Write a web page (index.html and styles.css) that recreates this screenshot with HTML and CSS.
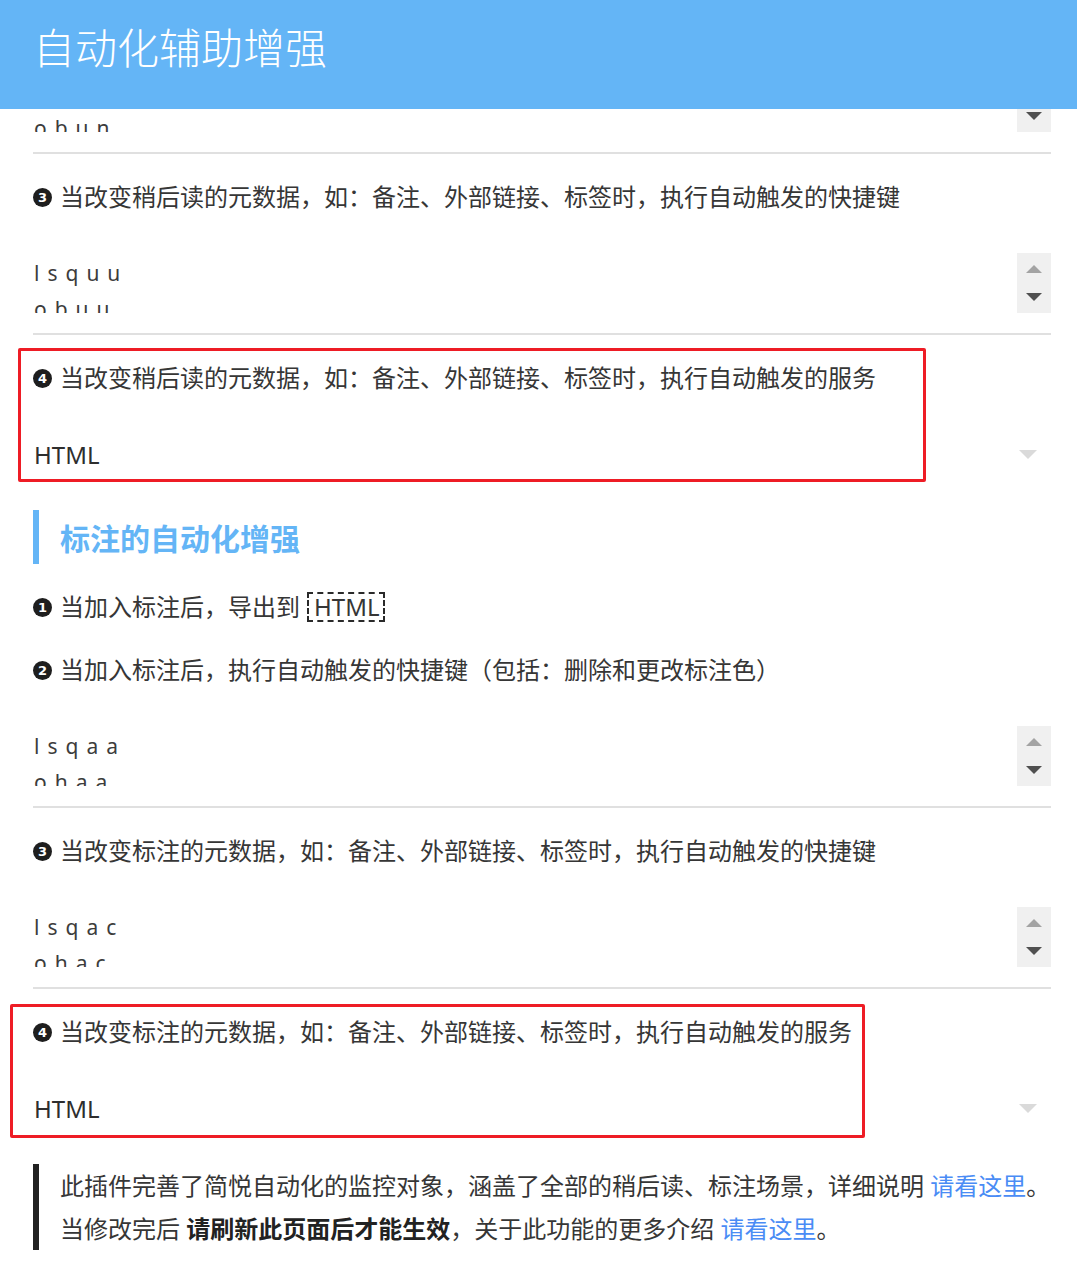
FILE: index.html
```html
<!DOCTYPE html>
<html lang="zh-CN">
<head>
<meta charset="utf-8">
<title>自动化辅助增强</title>
<link rel="stylesheet" href="styles.css">
</head>
<body>
<header class="topbar">
  <h1 class="topbar-title">自动化辅助增强</h1>
</header>

<main class="page">
  <div class="field field--partial">
    <div class="field-text">
      <div class="field-line">lsqun</div>
      <div class="field-line">obun</div>
    </div>
    <div class="scroll">
      <span class="arrow arrow-up arrow-muted"></span>
      <span class="arrow arrow-down"></span>
    </div>
  </div>

  <div class="item">
    <p class="label"><span class="num">3</span>当改变稍后读的元数据，如：备注、外部链接、标签时，执行自动触发的快捷键</p>
    <div class="field">
      <div class="field-text">
        <div class="field-line">lsquu</div>
        <div class="field-line">obuu</div>
      </div>
      <div class="scroll">
        <span class="arrow arrow-up arrow-muted"></span>
        <span class="arrow arrow-down"></span>
      </div>
    </div>
  </div>

  <div class="item item--flagged">
    <div class="flag flag-a"></div>
    <p class="label"><span class="num">4</span>当改变稍后读的元数据，如：备注、外部链接、标签时，执行自动触发的服务</p>
    <div class="select">
      <span class="select-value">HTML</span>
      <span class="select-caret"></span>
    </div>
  </div>

  <h2 class="section-title">标注的自动化增强</h2>

  <div class="item">
    <p class="label"><span class="num">1</span>当加入标注后，导出到 <span class="dashed">HTML</span></p>
  </div>

  <div class="item">
    <p class="label"><span class="num">2</span>当加入标注后，执行自动触发的快捷键（包括：删除和更改标注色）</p>
    <div class="field">
      <div class="field-text">
        <div class="field-line">lsqaa</div>
        <div class="field-line">ohaa</div>
      </div>
      <div class="scroll">
        <span class="arrow arrow-up arrow-muted"></span>
        <span class="arrow arrow-down"></span>
      </div>
    </div>
  </div>

  <div class="item">
    <p class="label"><span class="num">3</span>当改变标注的元数据，如：备注、外部链接、标签时，执行自动触发的快捷键</p>
    <div class="field">
      <div class="field-text">
        <div class="field-line">lsqac</div>
        <div class="field-line">ohac</div>
      </div>
      <div class="scroll">
        <span class="arrow arrow-up arrow-muted"></span>
        <span class="arrow arrow-down"></span>
      </div>
    </div>
  </div>

  <div class="item item--flagged">
    <div class="flag flag-b"></div>
    <p class="label"><span class="num">4</span>当改变标注的元数据，如：备注、外部链接、标签时，执行自动触发的服务</p>
    <div class="select">
      <span class="select-value">HTML</span>
      <span class="select-caret"></span>
    </div>
  </div>

  <blockquote class="note">
    <p>此插件完善了简悦自动化的监控对象，涵盖了全部的稍后读、标注场景，详细说明 <a class="link" href="#">请看这里</a>。</p>
    <p>当修改完后 <strong>请刷新此页面后才能生效</strong>，关于此功能的更多介绍 <a class="link" href="#">请看这里</a>。</p>
  </blockquote>
</main>
</body>
</html>
```

FILE: styles.css
```css
* {
  box-sizing: border-box;
}

html, body {
  margin: 0;
  padding: 0;
  background: #ffffff;
  overflow: hidden;
}

body {
  font-family: "Noto Sans", "Noto Sans CJK SC", sans-serif;
  color: #363636;
  font-size: 24px;
}

.topbar {
  position: fixed;
  top: 0;
  left: 0;
  right: 0;
  height: 109px;
  background: #64b5f6;
  z-index: 10;
  padding: 16px 0 0 33px;
}

.topbar-title {
  margin: 0;
  font-family: "Noto Sans CJK SC", sans-serif;
  font-size: 42px;
  line-height: 60px;
  font-weight: 300;
  color: #ffffff;
}

.page {
  padding: 72px 26px 0 33px;
  display: flex;
  flex-direction: column;
}

.item {
  display: flex;
  flex-direction: column;
}

.item--flagged {
  position: relative;
}

.label {
  margin: 23px 0 0 0;
  line-height: 40px;
  height: 40px;
  font-size: 24px;
  white-space: nowrap;
  display: flex;
  align-items: center;
}

.num {
  display: inline-flex;
  align-items: center;
  justify-content: center;
  width: 19px;
  height: 19px;
  border-radius: 50%;
  background: #1e1e1e;
  color: #ffffff;
  font-family: "DejaVu Sans", sans-serif;
  font-size: 13px;
  font-weight: bold;
  line-height: 1;
  margin-right: 8px;
  flex: none;
}

.field {
  display: flex;
  margin-top: 36px;
  padding-bottom: 20px;
  border-bottom: 2px solid #e0e0e0;
}

.field--partial {
  margin-top: 0;
}

.field-text {
  flex: 1;
  height: 60px;
  overflow: hidden;
  padding: 2px 0 0 1px;
}

.field-line {
  font-family: "Noto Sans", sans-serif;
  font-size: 21px;
  line-height: 36px;
  letter-spacing: 8px;
  color: #3c3c3c;
}

.scroll {
  width: 34px;
  height: 60px;
  background: #f0f0f0;
  display: flex;
  flex-direction: column;
  align-items: center;
  justify-content: space-between;
  padding: 12px 0;
  flex: none;
}

.arrow {
  width: 0;
  height: 0;
  border-left: 8px solid transparent;
  border-right: 8px solid transparent;
}

.arrow-up {
  border-bottom: 8px solid #a3a3a3;
}

.arrow-down {
  border-top: 8px solid #505050;
}

.select {
  margin-top: 36px;
  height: 40px;
  display: flex;
  align-items: center;
  justify-content: space-between;
  padding: 0 14px 0 1px;
}

.select-value {
  font-size: 24px;
  color: #2e2e2e;
}

.select-caret {
  width: 0;
  height: 0;
  border-left: 9px solid transparent;
  border-right: 9px solid transparent;
  border-top: 9px solid #dadada;
}

.flag {
  position: absolute;
  border: 3px solid #ee1c25;
  border-radius: 2px;
  pointer-events: none;
}

.flag-a {
  top: 13px;
  left: -15px;
  width: 908px;
  height: 134px;
}

.flag-b {
  top: 15px;
  left: -23px;
  width: 855px;
  height: 134px;
}

.section-title {
  margin: 36px 0 0 0;
  height: 54px;
  line-height: 54px;
  border-left: 6px solid #64b5f6;
  padding-left: 21px;
  font-family: "Noto Sans CJK SC", sans-serif;
  font-size: 30px;
  font-weight: bold;
  color: #64b5f6;
}

.dashed {
  display: inline-block;
  border: 2px dashed #2a2a2a;
  height: 30px;
  line-height: 26px;
  padding: 0 4px 0 5px;
  margin-left: 7px;
}

.note {
  margin: 36px 0 0 0;
  border-left: 6px solid #222222;
  padding-left: 21px;
}

.note p {
  margin: 0;
  font-size: 24px;
  line-height: 43px;
  white-space: nowrap;
  color: #363636;
}

.note strong {
  color: #222222;
  font-weight: bold;
}

.link {
  color: #4a8cf5;
  text-decoration: none;
}
```
